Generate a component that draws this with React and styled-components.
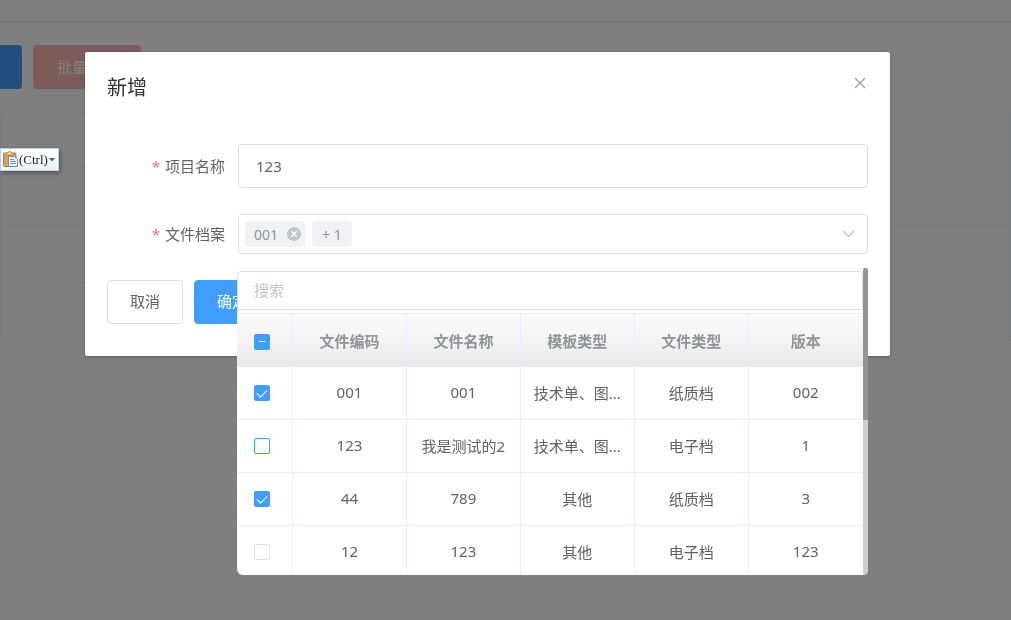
import React, { useEffect, useRef, useState } from "react";
import styled, { createGlobalStyle } from "styled-components";

const columns = ["文件编码", "文件名称", "模板类型", "文件类型", "版本"];

const files = [
  { code: "001", name: "001", template: "技术单、图...", type: "纸质档", version: "002" },
  { code: "123", name: "我是测试的2", template: "技术单、图...", type: "电子档", version: "1", active: true },
  { code: "44", name: "789", template: "其他", type: "纸质档", version: "3" },
  { code: "12", name: "123", template: "其他", type: "电子档", version: "123", disabled: true },
];

const App = () => {
  const [name, setName] = useState("123");
  const [selected, setSelected] = useState(["001", "44"]);
  const allRef = useRef(null);
  const partial = selected.length > 0 && selected.length < files.length;

  useEffect(() => {
    allRef.current.indeterminate = partial;
  }, [partial]);

  const toggle = (code) =>
    setSelected((list) => (list.includes(code) ? list.filter((c) => c !== code) : [...list, code]));

  const toggleAll = () =>
    setSelected((list) => (list.length ? [] : files.filter((f) => !f.disabled).map((f) => f.code)));

  return (
    <>
      <GlobalStyle />
      <Page>
        <TopBar />
        <Toolbar>
          <ToolButton $color="#409eff" $edge aria-label="新增" />
          <ToolButton $color="#fab6b6">批量删除</ToolButton>
        </Toolbar>
        <BackGrid>
          <BackRow $height="52px" />
          <BackRow $height="57px" />
          <BackRow $height="57px" />
          <BackRow $height="57px" />
        </BackGrid>
      </Page>

      <Overlay>
        <Dialog role="dialog" aria-labelledby="dialog-title">
          <DialogHeader>
            <Title id="dialog-title">新增</Title>
            <CloseButton aria-label="关闭">
              <svg width="12" height="12" viewBox="0 0 12 12" fill="none" stroke="#999ca1" strokeWidth="1.3">
                <path d="M1 1l10 10M11 1L1 11" />
              </svg>
            </CloseButton>
          </DialogHeader>

          <Form onSubmit={(e) => e.preventDefault()}>
            <Field>
              <Label htmlFor="project">项目名称</Label>
              <TextInput id="project" value={name} onChange={(e) => setName(e.target.value)} />
            </Field>
            <Field>
              <Label htmlFor="archive">文件档案</Label>
              <SelectWrap>
                <SelectBox>
                  {selected.length > 0 && (
                    <Tag>
                      {selected[0]}
                      <TagClose type="button" aria-label="移除" onClick={() => toggle(selected[0])}>
                        <svg width="14" height="14" viewBox="0 0 14 14">
                          <circle cx="7" cy="7" r="7" fill="#c0c4cc" />
                          <path d="M4.3 4.3l5.4 5.4M9.7 4.3L4.3 9.7" stroke="#fff" strokeWidth="1.3" />
                        </svg>
                      </TagClose>
                    </Tag>
                  )}
                  {selected.length > 1 && <Tag $count>+ {selected.length - 1}</Tag>}
                  <Arrow id="archive" type="button" aria-haspopup="true" aria-expanded="true">
                    <svg width="13" height="8" viewBox="0 0 13 8" fill="none" stroke="#c0c4cc" strokeWidth="1.3">
                      <path d="M1 1l5.5 5.5L12 1" />
                    </svg>
                  </Arrow>
                </SelectBox>

                <Dropdown>
                  <Panel>
                    <Search placeholder="搜索" aria-label="搜索" />
                    <Table>
                      <thead>
                        <tr>
                          <HeadCell $check>
                            <Check
                              ref={allRef}
                              type="checkbox"
                              aria-label="全选"
                              checked={selected.length === files.length}
                              onChange={toggleAll}
                            />
                          </HeadCell>
                          {columns.map((c) => (
                            <HeadCell key={c}>{c}</HeadCell>
                          ))}
                        </tr>
                      </thead>
                      <tbody>
                        {files.map((f) => (
                          <tr key={f.code}>
                            <Cell $check>
                              <Check
                                type="checkbox"
                                aria-label={f.code}
                                checked={selected.includes(f.code)}
                                disabled={f.disabled}
                                $active={f.active}
                                onChange={() => toggle(f.code)}
                              />
                            </Cell>
                            <Cell>{f.code}</Cell>
                            <Cell>{f.name}</Cell>
                            <Cell>{f.template}</Cell>
                            <Cell>{f.type}</Cell>
                            <Cell>{f.version}</Cell>
                          </tr>
                        ))}
                      </tbody>
                    </Table>
                  </Panel>
                  <Track>
                    <Thumb />
                  </Track>
                </Dropdown>
              </SelectWrap>
            </Field>
            <Actions>
              <Button type="button">取消</Button>
              <Button type="submit" $primary>
                确定
              </Button>
            </Actions>
          </Form>
        </Dialog>
      </Overlay>

      <PasteButton>
        <svg width="15" height="17" viewBox="0 0 15 17">
          <rect x="0.5" y="2" width="12.5" height="13.5" rx="1" fill="#e2a04a" stroke="#b87a2c" />
          <path d="M3 4V2h2a1.6 1.6 0 0 1 3.4 0h2v2z" fill="#f6dc8c" stroke="#a8803a" strokeWidth="0.8" />
          <path d="M5.5 5.5h6l3 3v7h-9z" fill="#f4f8ff" stroke="#6a8fc4" />
          <path d="M7 8.5h4M7 10.5h6M7 12.5h6" stroke="#6a93cf" />
        </svg>
        (Ctrl)
        <svg width="6" height="4" viewBox="0 0 6 4">
          <path d="M0 0h6L3 3.5z" fill="#44618f" />
        </svg>
      </PasteButton>
    </>
  );
};

const GlobalStyle = createGlobalStyle`
  * {
    box-sizing: border-box;
  }
  body {
    margin: 0;
    background: #fff;
    color: #606266;
  }
  body, button, input {
    font-family: "Noto Sans", "Noto Sans CJK SC", sans-serif;
    font-size: 15px;
  }
  button {
    padding: 0;
    border: none;
    background: none;
    cursor: pointer;
  }
`;

const Page = styled.div`
  min-height: 100vh;
`;

const TopBar = styled.header`
  height: 23px;
  border-bottom: 2px solid #eceef2;
`;

const Toolbar = styled.div`
  display: flex;
  gap: 11px;
  padding: 22px 0 24px;
`;

const ToolButton = styled.button`
  height: 44px;
  min-width: 22px;
  padding: ${(p) => (p.$edge ? "0" : "0 24px 2px")};
  border-radius: ${(p) => (p.$edge ? "0 4px 4px 0" : "4px")};
  background: ${(p) => p.$color};
  color: #fff;
`;

const BackGrid = styled.div`
  border: 1px solid #f0f2f6;
  border-bottom: none;
`;

const BackRow = styled.div`
  height: calc(${(p) => p.$height} + 1px);
  border-bottom: 1px solid #f0f2f6;
`;

const Overlay = styled.div`
  position: fixed;
  inset: 0;
  padding: 52px 12% 0 85px;
  background: rgba(0, 0, 0, 0.5);
`;

const Dialog = styled.section`
  padding: 21px 22px 32px;
  border-radius: 2px;
  background: #fff;
  box-shadow: 0 1px 3px rgba(0, 0, 0, 0.3);
`;

const DialogHeader = styled.header`
  display: flex;
  justify-content: space-between;
  align-items: flex-start;
  margin-bottom: 41px;
`;

const Title = styled.h1`
  margin: 0;
  font-size: 20px;
  font-weight: 400;
  line-height: 30px;
  color: #303133;
`;

const CloseButton = styled.button`
  display: grid;
  place-items: center;
  width: 16px;
  height: 20px;
`;

const Form = styled.form`
  display: flex;
  flex-direction: column;
  gap: 26px;
`;

const Field = styled.div`
  display: grid;
  grid-template-columns: 118px 1fr;
  column-gap: 13px;
  align-items: center;
`;

const Label = styled.label`
  padding-bottom: 2px;
  text-align: right;
  &::before {
    content: "*";
    margin-right: 5px;
    color: #f56c6c;
  }
`;

const TextInput = styled.input`
  width: 100%;
  height: 44px;
  padding: 0 17px 1px;
  border: 1px solid #dcdfe6;
  border-radius: 4px;
  outline: none;
  color: #606266;
`;

const SelectWrap = styled.div`
  position: relative;
`;

const SelectBox = styled.div`
  display: flex;
  align-items: center;
  gap: 7px;
  height: 40px;
  padding: 0 12px 0 6px;
  border: 1px solid #dcdfe6;
  border-radius: 4px;
`;

const Tag = styled.span`
  display: flex;
  align-items: center;
  gap: 9px;
  height: 26px;
  padding: ${(p) => (p.$count ? "0 10px" : "0 4px 0 9px")};
  border-radius: 4px;
  background: #f0f2f5;
  color: #909399;
  font-size: 14px;
`;

const TagClose = styled.button`
  display: flex;
`;

const Arrow = styled.button`
  display: flex;
  margin-left: auto;
`;

const Dropdown = styled.div`
  position: absolute;
  z-index: 2;
  top: calc(100% + 17px);
  left: -1px;
  right: 0;
  display: flex;
  height: 304px;
`;

const Panel = styled.div`
  flex: 1;
  min-width: 0;
  overflow: hidden;
  border-radius: 4px 0 0 6px;
  background: #fff;
`;

const Search = styled.input`
  display: block;
  width: 100%;
  height: 39px;
  margin-bottom: 3px;
  padding: 0 16px 2px;
  border: 1px solid #dcdfe6;
  border-radius: 4px 4px 0 0;
  outline: none;
  &::placeholder {
    color: #c0c4cc;
  }
`;

const Table = styled.table`
  width: 100%;
  table-layout: fixed;
  border-collapse: separate;
  border-spacing: 0;
  border-top: 1px solid #ebeef5;
  text-align: center;
  thead {
    background: linear-gradient(#fcfcfc, #eaeaea);
  }
`;

const HeadCell = styled.th`
  width: ${(p) => (p.$check ? "56px" : "auto")};
  height: 53px;
  padding: ${(p) => (p.$check ? "2px 0 0 17px" : "0")};
  border-right: 1px solid #ebeef5;
  color: #909399;
  font-weight: 700;
  &:last-child {
    border-right: none;
  }
`;

const Cell = styled.td`
  height: 53px;
  padding: ${(p) => (p.$check ? "0 0 0 17px" : "0 0 2px")};
  border-right: 1px solid #ebeef5;
  border-bottom: 1px solid #ebeef5;
  white-space: nowrap;
  &:last-child {
    border-right: none;
  }
`;

const Check = styled.input`
  display: grid;
  place-items: center;
  width: 16px;
  height: 16px;
  margin: 0;
  appearance: none;
  border: 1px solid ${(p) => (p.$active ? "#409eff" : "#dcdfe6")};
  border-radius: 2px;
  background: #fff;
  &:checked,
  &:indeterminate {
    border-color: #409eff;
    background: #409eff;
  }
  &:checked::after {
    content: "";
    width: 9px;
    height: 5px;
    margin-bottom: 3px;
    border: solid #fff;
    border-width: 0 0 1px 1px;
    transform: rotate(-45deg);
  }
  &:indeterminate::after {
    content: "";
    width: 6px;
    height: 1px;
    background: #fff;
  }
`;

const Track = styled.div`
  position: relative;
  width: 5px;
  border-radius: 0 0 4px 0;
  background: #cdcdcd;
`;

const Thumb = styled.div`
  position: absolute;
  top: -3px;
  width: 100%;
  height: 50%;
  border-radius: 2px 2px 0 0;
  background: #949494;
`;

const Actions = styled.div`
  display: flex;
  gap: 11px;
`;

const Button = styled.button`
  height: 44px;
  padding: 0 22px 3px;
  border: 1px solid ${(p) => (p.$primary ? "#409eff" : "#dcdfe6")};
  border-radius: 4px;
  background: ${(p) => (p.$primary ? "#409eff" : "#fff")};
  color: ${(p) => (p.$primary ? "#fff" : "#606266")};
`;

const PasteButton = styled.button`
  position: fixed;
  z-index: 3;
  top: 148px;
  left: 0;
  display: flex;
  align-items: center;
  gap: 1px;
  height: 23px;
  padding: 0 3px 0 2px;
  border: 1px solid #b5d3ea;
  background: linear-gradient(#fff, #eff3f8);
  box-shadow: 1px 2px 5px rgba(0, 0, 0, 0.4);
  color: #222;
  font-family: "Liberation Serif", serif;
  font-size: 13px;
`;

export default App;
